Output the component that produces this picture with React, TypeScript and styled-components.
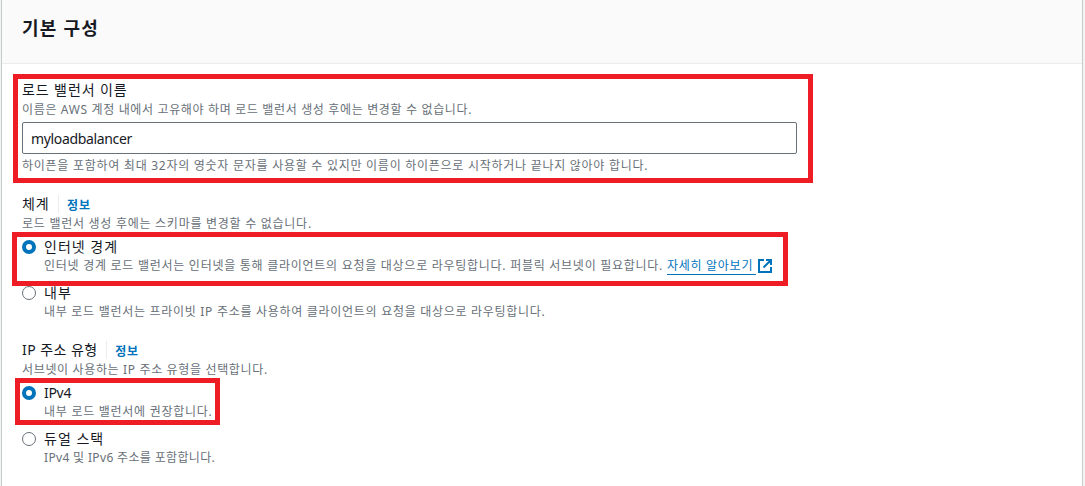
import React from 'react';
import styled, {createGlobalStyle} from "styled-components";

const theme = {
    text: '#16191f',
    secondary: '#687078',
    link: '#0073bb',
    border: '#eaeded',
    mark: '#ee1c25',
}

const App = () => {
    return (
        <Page>
            <GlobalStyle/>
            <Panel>
                <Header>
                    <Title>기본 구성</Title>
                </Header>
                <Body>
                    <Field>
                        <Label as="label" htmlFor="name">로드 밸런서 이름</Label>
                        <Description $spacing={0.65}>이름은 AWS 계정 내에서 고유해야 하며 로드 밸런서 생성 후에는 변경할 수 없습니다.</Description>
                        <Input id="name" defaultValue="myloadbalancer" spellCheck={false}/>
                        <Description>하이픈을 포함하여 최대 32자의 영숫자 문자를 사용할 수 있지만 이름이 하이픈으로 시작하거나 끝나지 않아야 합니다.</Description>
                    </Field>
                    <Field>
                        <Label>체계<Info href="#">정보</Info></Label>
                        <Description>로드 밸런서 생성 후에는 스키마를 변경할 수 없습니다.</Description>
                        <Options>
                            <Option>
                                <Radio $checked/>
                                <OptionLabel>인터넷 경계</OptionLabel>
                                <OptionText>
                                    인터넷 경계 로드 밸런서는 인터넷을 통해 클라이언트의 요청을 대상으로 라우팅합니다. 퍼블릭 서브넷이 필요합니다.{' '}
                                    <Link href="#">자세히 알아보기</Link>
                                    <ExternalIcon/>
                                </OptionText>
                            </Option>
                            <Option>
                                <Radio/>
                                <OptionLabel>내부</OptionLabel>
                                <OptionText $spacing={0.71}>내부 로드 밸런서는 프라이빗 IP 주소를 사용하여 클라이언트의 요청을 대상으로 라우팅합니다.</OptionText>
                            </Option>
                        </Options>
                    </Field>
                    <Field>
                        <Label $spacing={0.45}>IP 주소 유형<Info href="#">정보</Info></Label>
                        <Description $spacing={0.65}>서브넷이 사용하는 IP 주소 유형을 선택합니다.</Description>
                        <Options>
                            <Option>
                                <Radio $checked/>
                                <OptionLabel $spacing={-0.3}>IPv4</OptionLabel>
                                <OptionText>내부 로드 밸런서에 권장합니다.</OptionText>
                            </Option>
                            <Option>
                                <Radio/>
                                <OptionLabel>듀얼 스택</OptionLabel>
                                <OptionText $spacing={0.34}>IPv4 및 IPv6 주소를 포함합니다.</OptionText>
                            </Option>
                        </Options>
                    </Field>
                </Body>
            </Panel>
            <Highlight $left={13} $top={74} $width={800} $height={109}/>
            <Highlight $left={12} $top={232} $width={776} $height={54}/>
            <Highlight $left={15} $top={378} $width={205} $height={47}/>
        </Page>
    );
};

const ExternalIcon = () => (
    <IconSvg viewBox="0 0 16 16" width="16" height="16">
        <path d="M7 2H2v12h12V9M9 2h5v5M6.5 9.5L14 2"/>
    </IconSvg>
);

const GlobalStyle = createGlobalStyle`
    * {
        box-sizing: border-box;
        margin: 0;
    }

    body {
        background: #f2f3f3;
        color: ${theme.text};
        font-family: "Noto Sans", "Noto Sans CJK KR", sans-serif;
        overflow: hidden;
    }
`

const Page = styled.div`
    position: relative;
    height: 486px;
    padding: 0 2px 0 1px;
    overflow: hidden;
`

const Panel = styled.section`
    height: 486px;
    background: #fff;
    border-left: 1px solid #c5cccc;
    border-right: 1px solid #c5cccc;
`

const Header = styled.header`
    display: flex;
    align-items: center;
    height: 64px;
    padding: 0 20px 7px;
    background: #fafafa;
    border-bottom: 1px solid ${theme.border};
`

const Title = styled.h2`
    font-size: 18px;
    font-weight: 700;
    line-height: 22px;
    letter-spacing: 1.2px;
`

const Body = styled.div`
    display: flex;
    flex-direction: column;
    gap: 20px;
    padding: 15px 20px 0;
`

const Field = styled.div`
    display: flex;
    flex-direction: column;
`

const Label = styled.div<{ $spacing?: number }>`
    display: flex;
    align-items: center;
    height: 20px;
    font-size: 14px;
    line-height: 20px;
    letter-spacing: ${props => props.$spacing ?? 0.9}px;
    white-space: nowrap;

    &[for] {
        height: 21px;
    }
`

const Info = styled.a`
    height: 18px;
    margin-left: 8px;
    padding-left: 8.5px;
    border-left: 1px solid ${theme.border};
    color: ${theme.link};
    font-size: 12px;
    font-weight: 700;
    line-height: 21px;
    letter-spacing: 0.9px;
    text-decoration: none;
`

const Description = styled.p<{ $spacing?: number }>`
    height: 18px;
    color: ${theme.secondary};
    font-size: 12px;
    line-height: 20px;
    letter-spacing: ${props => props.$spacing ?? 0.73}px;
    white-space: nowrap;
`

const Input = styled.input`
    width: 775px;
    height: 32px;
    margin: 4px 0 2px;
    padding: 0 8px;
    background: #fff;
    border: 1px solid ${theme.secondary};
    border-radius: 2px;
    color: ${theme.text};
    font-family: inherit;
    font-size: 14px;
    letter-spacing: -0.35px;
    outline: none;
`

const Options = styled.div`
    display: flex;
    flex-direction: column;
    gap: 9px;
    margin-top: 5px;
`

const Option = styled.div`
    display: grid;
    grid-template-columns: 14px auto;
    grid-template-rows: 19px 18px;
    column-gap: 8px;
    align-items: center;
    justify-content: start;
`

const Radio = styled.span<{ $checked?: boolean }>`
    width: 14px;
    height: 14px;
    background: #fff;
    border: ${props => props.$checked ? `4px solid ${theme.link}` : `1px solid ${theme.secondary}`};
    border-radius: 50%;
`

const OptionLabel = styled.span<{ $spacing?: number }>`
    font-size: 14px;
    line-height: 19px;
    letter-spacing: ${props => props.$spacing ?? 1}px;
    white-space: nowrap;
`

const OptionText = styled(Description)`
    display: flex;
    grid-column: 2;
    white-space: pre;
`

const Link = styled.a`
    height: 19px;
    padding-right: 3px;
    border-bottom: 1px solid ${theme.link};
    color: ${theme.link};
    text-decoration: none;
`

const IconSvg = styled.svg`
    margin: 2px 0 0 1px;
    fill: none;
    stroke: ${theme.link};
    stroke-width: 2;
`

const Highlight = styled.div<{ $left: number; $top: number; $width: number; $height: number }>`
    position: absolute;
    left: ${props => props.$left}px;
    top: ${props => props.$top}px;
    width: ${props => props.$width}px;
    height: ${props => props.$height}px;
    border: 5px solid ${theme.mark};
    pointer-events: none;
`

export default App;
